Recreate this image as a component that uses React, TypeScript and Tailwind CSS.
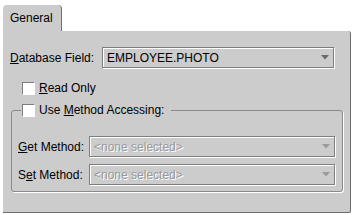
import React from "react";

function Arrow({ disabled }: { disabled?: boolean }) {
    return (
        <svg width="8" height="5" viewBox="0 0 8 5" className="shrink-0">
            <path d="M0 0H8L4 4.5Z" fill={disabled ? "#9a9a9a" : "#6a6a6a"} />
        </svg>
    );
}

function Combo({ value, disabled, width }: { value: string; disabled?: boolean; width: string }) {
    return (
        <div
            className={`${width} h-[21px] flex items-center justify-between pl-[4px] pr-[4px] border border-[#7e7e7e] bg-[#cccccc] shadow-[inset_1px_1px_0_#ffffff,1px_1px_0_#ffffff]`}
        >
            <span className={disabled ? "text-[#9a9a9a] [text-shadow:1px_1px_0_#ffffff]" : "text-black"}>{value}</span>
            <Arrow disabled={disabled} />
        </div>
    );
}

function CheckBox() {
    return <div className="w-[12px] h-[12px] bg-white border-t border-l border-[#7e7e7e] shadow-[1px_1px_0_#ffffff] shrink-0" />;
}

export default function App() {
    return (
        <div className="w-[353px] h-[215px] bg-white text-[12px] leading-none text-black font-['Liberation_Sans',Arial,sans-serif]">
            <div className="pt-[5px] pl-[3px] flex">
                <div className="w-[59px] h-[26px] bg-[#cccccc] rounded-tl-[4px] rounded-tr-[4px] border-r border-[#6e6e6e] flex items-center pl-[7px]">
                    General
                </div>
            </div>
            <div className="ml-[3px] w-[348px] h-[182px] bg-[#cccccc] border-r border-b border-[#6e6e6e] rounded-tr-[3px] rounded-br-[2px] flex flex-col">
                <div className="mt-[16px] flex items-center pl-[7px]">
                    <div className="w-[92px]">
                        <u>D</u>atabase Field:
                    </div>
                    <Combo value="EMPLOYEE.PHOTO" width="w-[232px]" />
                </div>
                <div className="mt-[14px] pl-[19px] flex items-center gap-[5px]">
                    <CheckBox />
                    <span>
                        <u>R</u>ead Only
                    </span>
                </div>
                <fieldset className="mt-[10px] ml-[8px] w-[332px] border border-[#8a8a8a] rounded-[3px] pl-[6px] pt-[20px] pb-[6px] shadow-[1px_1px_0_#ffffff]">
                    <legend className="ml-[3px] pl-[1px] pr-[7px] flex items-center gap-[5px] h-[12px]">
                        <CheckBox />
                        <span>
                            Use <u>M</u>ethod Accessing:
                        </span>
                    </legend>
                    <div className="flex items-center">
                        <div className="w-[71px]">
                            <u>G</u>et Method:
                        </div>
                        <Combo value="<none selected>" disabled width="w-[246px]" />
                    </div>
                    <div className="mt-[7px] flex items-center">
                        <div className="w-[71px]">
                            S<u>e</u>t Method:
                        </div>
                        <Combo value="<none selected>" disabled width="w-[246px]" />
                    </div>
                </fieldset>
            </div>
        </div>
    );
}
